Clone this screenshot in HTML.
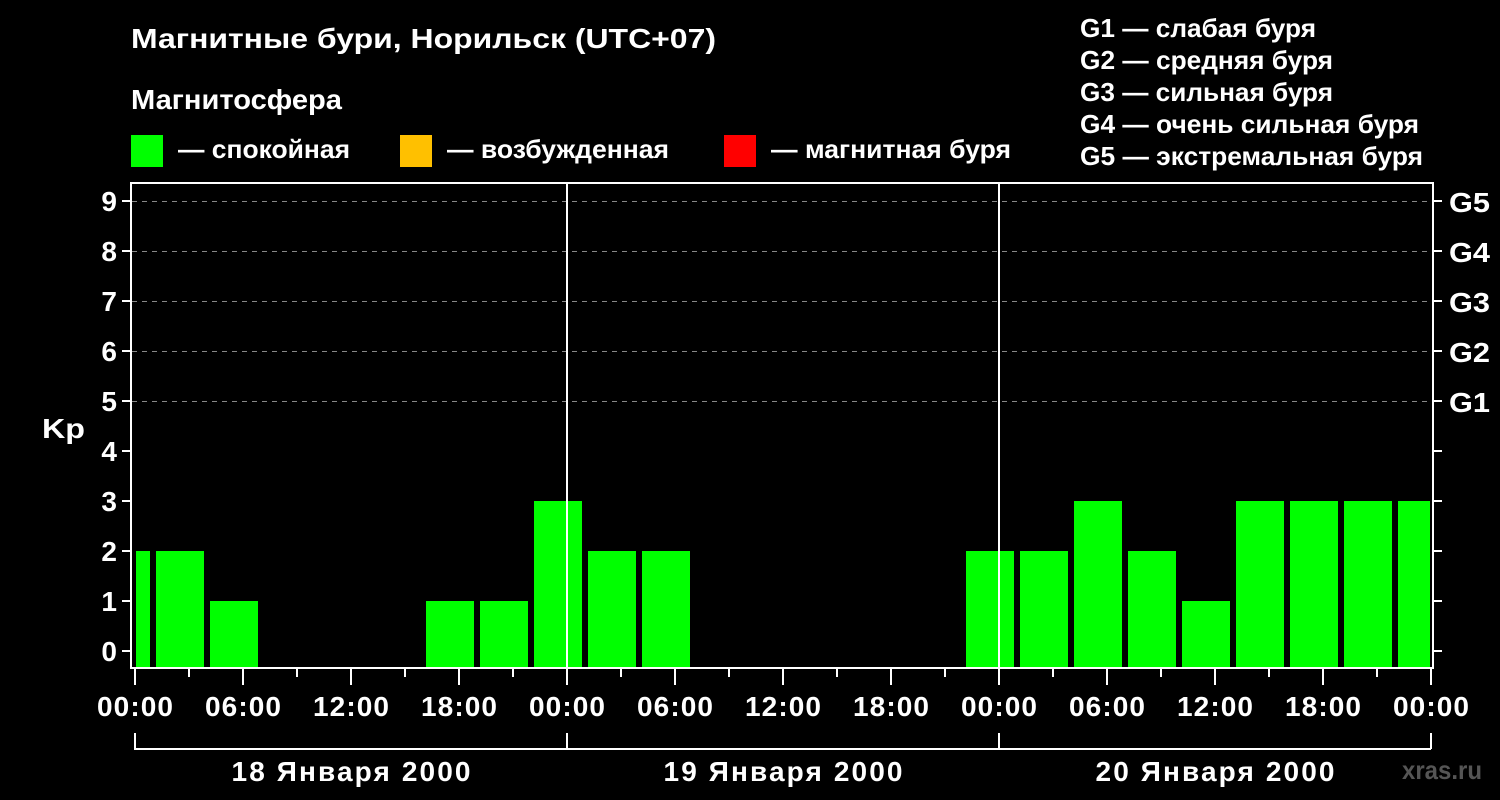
<!DOCTYPE html><html><head><meta charset="utf-8"><style>body{margin:0;background:#000}svg{display:block}text{font-family:"Liberation Sans",sans-serif;font-weight:bold;fill:#fff}</style></head><body>
<svg width="1500" height="800" viewBox="0 0 1500 800">
<rect width="1500" height="800" fill="#000"/>
<text x="131" y="48" font-size="28" textLength="585" lengthAdjust="spacingAndGlyphs">Магнитные бури, Норильск (UTC+07)</text>
<text x="131" y="109" font-size="28" textLength="211" lengthAdjust="spacingAndGlyphs">Магнитосфера</text>
<rect x="131" y="135" width="32" height="32" fill="#00ff00"/><text x="178" y="158" font-size="26" textLength="172" lengthAdjust="spacingAndGlyphs">— спокойная</text>
<rect x="400" y="135" width="32" height="32" fill="#ffc000"/><text x="447" y="158" font-size="26" textLength="222" lengthAdjust="spacingAndGlyphs">— возбужденная</text>
<rect x="724" y="135" width="32" height="32" fill="#ff0000"/><text x="771" y="158" font-size="26" textLength="240" lengthAdjust="spacingAndGlyphs">— магнитная буря</text>
<g font-size="26"><text x="1080" y="37" textLength="236" lengthAdjust="spacingAndGlyphs">G1 — слабая буря</text><text x="1080" y="69" textLength="253" lengthAdjust="spacingAndGlyphs">G2 — средняя буря</text><text x="1080" y="101" textLength="253" lengthAdjust="spacingAndGlyphs">G3 — сильная буря</text><text x="1080" y="133" textLength="339" lengthAdjust="spacingAndGlyphs">G4 — очень сильная буря</text><text x="1080" y="165" textLength="343" lengthAdjust="spacingAndGlyphs">G5 — экстремальная буря</text></g>
<g stroke="#888" stroke-width="1" stroke-dasharray="5,5">
<line x1="132" y1="201.5" x2="1432" y2="201.5"/><line x1="132" y1="251.5" x2="1432" y2="251.5"/><line x1="132" y1="301.5" x2="1432" y2="301.5"/><line x1="132" y1="351.5" x2="1432" y2="351.5"/><line x1="132" y1="401.5" x2="1432" y2="401.5"/></g>
<g fill="#00ff00">
<rect x="136" y="551" width="14" height="117"/><rect x="156" y="551" width="48" height="117"/><rect x="210" y="601" width="48" height="67"/>
<rect x="426" y="601" width="48" height="67"/><rect x="480" y="601" width="48" height="67"/><rect x="534" y="501" width="48" height="167"/><rect x="588" y="551" width="48" height="117"/><rect x="642" y="551" width="48" height="117"/>
<rect x="966" y="551" width="48" height="117"/><rect x="1020" y="551" width="48" height="117"/><rect x="1074" y="501" width="48" height="167"/><rect x="1128" y="551" width="48" height="117"/><rect x="1182" y="601" width="48" height="67"/><rect x="1236" y="501" width="48" height="167"/><rect x="1290" y="501" width="48" height="167"/><rect x="1344" y="501" width="48" height="167"/><rect x="1398" y="501" width="32" height="167"/>
</g>
<g stroke="#fff" stroke-width="2" fill="none">
<rect x="131" y="183" width="1302" height="485"/>
<line x1="567" y1="183" x2="567" y2="668"/><line x1="999" y1="183" x2="999" y2="668"/>
<path d="M122 201h9M122 251h9M122 301h9M122 351h9M122 401h9M122 451h9M122 501h9M122 551h9M122 601h9M122 651h9"/>
<path d="M1433 201h9M1433 251h9M1433 301h9M1433 351h9M1433 401h9M1433 451h9M1433 501h9M1433 551h9M1433 601h9M1433 651h9"/>
<path d="M135 668v17M243 668v17M351 668v17M459 668v17M567 668v17M675 668v17M783 668v17M891 668v17M999 668v17M1107 668v17M1215 668v17M1323 668v17M1431 668v17"/>
<path d="M189 668v9M297 668v9M405 668v9M513 668v9M621 668v9M729 668v9M837 668v9M945 668v9M1053 668v9M1161 668v9M1269 668v9M1377 668v9"/>
<path d="M135 733v16H1431M567 733v16M999 733v16M1431 733v16"/>
</g>
<g font-size="28" text-anchor="end"><text x="117" y="211">9</text><text x="117" y="261">8</text><text x="117" y="311">7</text><text x="117" y="361">6</text><text x="117" y="411">5</text><text x="117" y="461">4</text><text x="117" y="511">3</text><text x="117" y="561">2</text><text x="117" y="611">1</text><text x="117" y="661">0</text></g>
<text x="42" y="438" font-size="28" textLength="43" lengthAdjust="spacingAndGlyphs">Kp</text>
<g font-size="28"><text x="1449" y="212" textLength="41" lengthAdjust="spacingAndGlyphs">G5</text><text x="1449" y="262" textLength="41" lengthAdjust="spacingAndGlyphs">G4</text><text x="1449" y="312" textLength="41" lengthAdjust="spacingAndGlyphs">G3</text><text x="1449" y="362" textLength="41" lengthAdjust="spacingAndGlyphs">G2</text><text x="1449" y="412" textLength="41" lengthAdjust="spacingAndGlyphs">G1</text></g>
<g font-size="28" text-anchor="middle" lengthAdjust="spacingAndGlyphs"><text x="135" y="716" textLength="76">00:00</text><text x="243" y="716" textLength="76">06:00</text><text x="351" y="716" textLength="76">12:00</text><text x="459" y="716" textLength="76">18:00</text><text x="567" y="716" textLength="76">00:00</text><text x="675" y="716" textLength="76">06:00</text><text x="783" y="716" textLength="76">12:00</text><text x="891" y="716" textLength="76">18:00</text><text x="999" y="716" textLength="76">00:00</text><text x="1107" y="716" textLength="76">06:00</text><text x="1215" y="716" textLength="76">12:00</text><text x="1323" y="716" textLength="76">18:00</text><text x="1431" y="716" textLength="76">00:00</text>
<text x="351" y="781" textLength="239">18 Января 2000</text><text x="783" y="781" textLength="239">19 Января 2000</text><text x="1215" y="781" textLength="239">20 Января 2000</text></g>
<text x="1402" y="779" font-size="26" textLength="80" lengthAdjust="spacingAndGlyphs" style="fill:#555">xras.ru</text>
</svg></body></html>
